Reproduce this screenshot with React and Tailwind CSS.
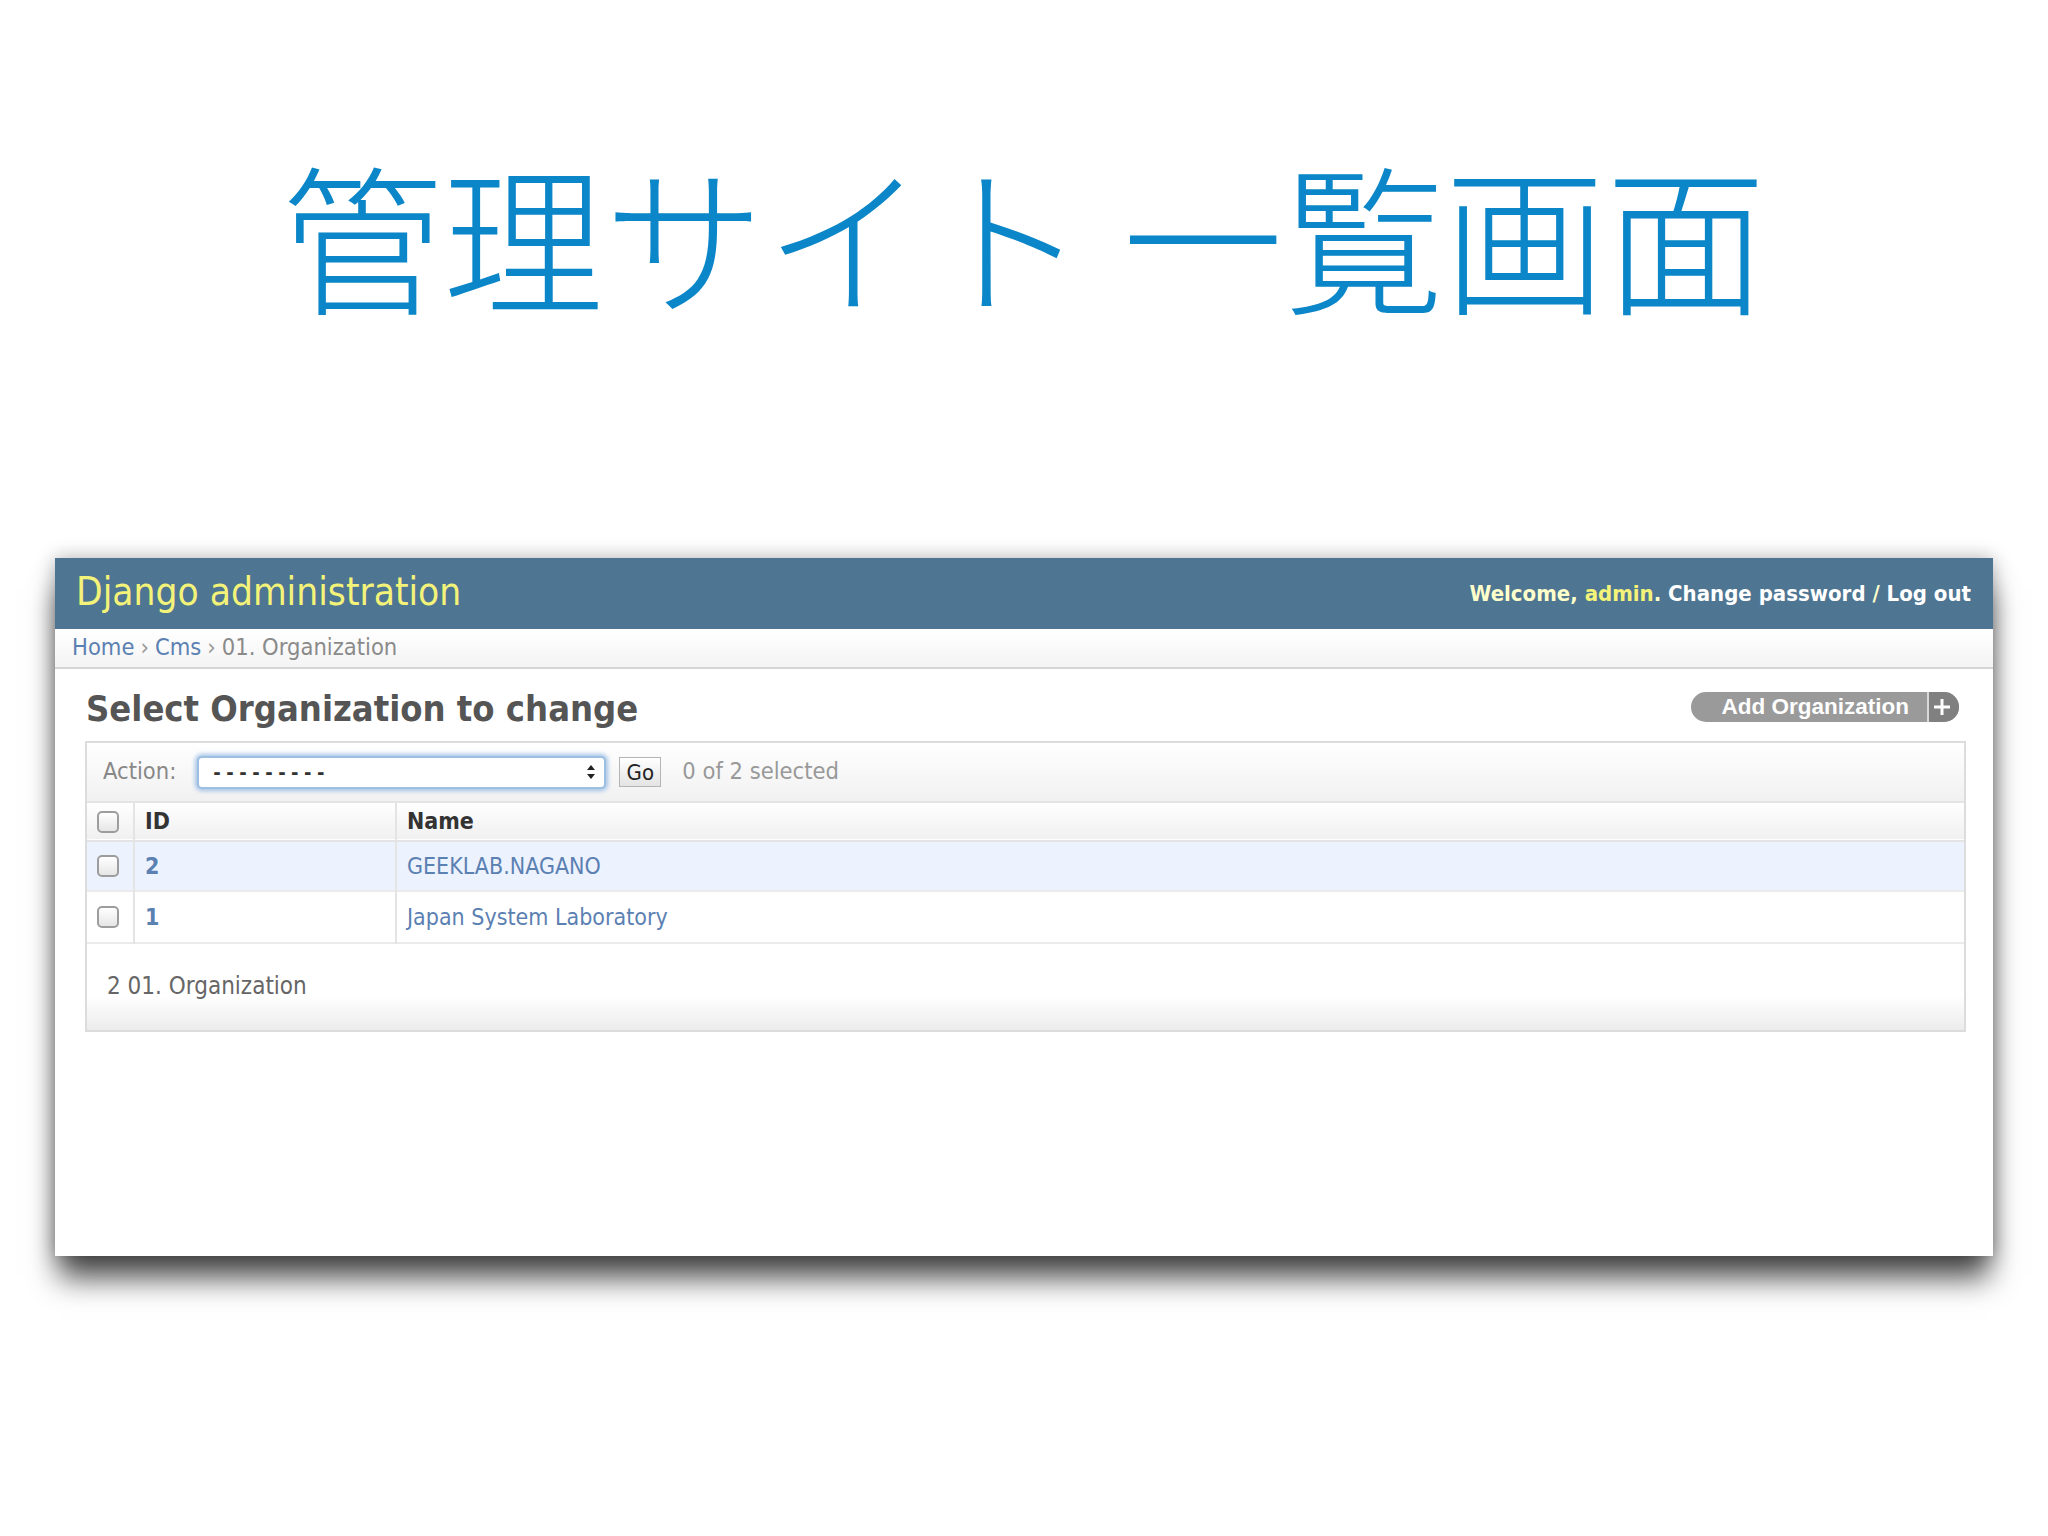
import React from 'react';

const ui = { fontFamily: '"DejaVu Sans Condensed", "DejaVu Sans", "Noto Sans", sans-serif', fontStretch: 'condensed' };

function Check() {
  return (
    <span className="inline-block w-[22px] h-[22px] rounded-[5px] border-2 border-[#9d9d9d] bg-gradient-to-b from-white to-[#e6e6e6]" />
  );
}

export default function App() {
  const rows = [
    { id: 2, name: 'GEEKLAB.NAGANO' },
    { id: 1, name: 'Japan System Laboratory' },
  ];

  return (
    <div className="w-[2048px] h-[1536px] bg-white overflow-hidden">
      <h1
        className="pt-[152px] text-center text-[#0b86c8] text-[161px] leading-none font-light"
        style={{ fontFamily: '"Noto Sans CJK JP", "Noto Sans CJK SC", sans-serif' }}
      >
        管理サイト 一覧画面
      </h1>

      <div className="mt-[245px] ml-[55px] w-[1938px] h-[698px] bg-white shadow-[0_26px_28px_-4px_rgba(0,0,0,0.7),0_0_18px_rgba(0,0,0,0.3)]" style={ui}>
        {/* header */}
        <div className="h-[71px] bg-[#4e7591] flex items-center justify-between pl-[21px] pr-[22px]">
          <div className="text-[38.5px] text-[#f4f379] leading-none pb-[2px]">Django administration</div>
          <div className="text-[22px] font-bold text-[#ffffcc] leading-none">
            Welcome, <span className="text-[#f4f379]">admin</span>. <span className="text-white">Change password</span> / <span className="text-white">Log out</span>
          </div>
        </div>

        {/* breadcrumbs */}
        <div className="h-[40px] flex items-center px-[17px] text-[23.5px] text-[#999] border-b-2 border-[#d6d6d6] bg-gradient-to-b from-white to-[#f4f4f4]">
          <span className="text-[#5b80b2]">Home</span>
          <span className="mx-[6px]">›</span>
          <span className="text-[#5b80b2]">Cms</span>
          <span className="mx-[6px]">›</span>
          <span className="text-[#8a8a8a]">01. Organization</span>
        </div>

        <div className="pl-[30px] pr-[27px]">
          <div className="flex items-center justify-between h-[72px] pt-[8px]">
            <div className="text-[36px] font-bold text-[#555] leading-none pl-[1px]">Select Organization to change</div>
            <div
              className="flex items-stretch h-[30px] rounded-full overflow-hidden bg-[#9a9a9a] text-white text-[22.5px] font-bold mr-[7px] -mt-[4px]"
              style={{ fontFamily: '"Liberation Sans", Arial, sans-serif' }}
            >
              <span className="flex items-center pl-[31px] pr-[18px]">Add Organization</span>
              <span className="w-[2px] bg-[#d8d8d8]" />
              <span className="flex items-center justify-center w-[30px] pr-[4px] bg-[#808080]">
                <svg width="18" height="18" viewBox="0 0 18 18">
                  <path d="M9 1 V17 M1 9 H17" stroke="#fff" strokeWidth="3" />
                </svg>
              </span>
            </div>
          </div>

          {/* changelist */}
          <div className="border-2 border-[#dcdcdc]">
            <div className="h-[60px] flex items-center pl-[16px] bg-gradient-to-b from-white to-[#f1f1f1] border-b-2 border-[#e4e4e4] text-[23.5px]">
              <span className="text-[#888]">Action:</span>
              <div className="ml-[21px] w-[409px] h-[33px] rounded-[5px] border-2 border-[#9dbfe2] shadow-[0_0_4px_2px_rgba(110,160,220,0.6)] bg-white flex items-center justify-between pl-[14px] pr-[8px]">
                <span className="text-[#333] text-[20px] font-bold tracking-[5.5px]">---------</span>
                <svg width="10" height="18" viewBox="0 0 10 18">
                  <path d="M5 2 L9 7 H1 Z" fill="#222" />
                  <path d="M5 16 L9 11 H1 Z" fill="#222" />
                </svg>
              </div>
              <div className="ml-[13px] w-[42px] h-[30px] border border-[#b5b5b5] bg-gradient-to-b from-white to-[#e4e4e4] flex items-center justify-center text-[22px] text-[#222]">Go</div>
              <span className="ml-[21px] text-[#999]">0 of 2 selected</span>
            </div>

            <table className="w-full border-collapse text-[23px]">
              <thead>
                <tr className="h-[38px] bg-gradient-to-b from-white to-[#f0f0f0] border-b-2 border-[#e4e4e4]">
                  <th className="w-[47px] border-r-2 border-[#e4e4e4] pl-[10px] text-left align-middle"><div className="flex"><Check /></div></th>
                  <th className="w-[262px] border-r-2 border-[#e4e4e4] pl-[10px] text-left font-bold text-[#333]">ID</th>
                  <th className="pl-[10px] text-left font-bold text-[#333]">Name</th>
                </tr>
              </thead>
              <tbody>
                {rows.map((r, i) => (
                  <tr key={r.id} className={(i === 0 ? 'h-[50px] bg-[#edf3fe]' : 'h-[52px] bg-white') + ' border-b-2 border-[#ebebeb]'}>
                    <td className="border-r-2 border-[#e4e4e4] pl-[10px] align-middle"><div className="flex"><Check /></div></td>
                    <td className="border-r-2 border-[#e4e4e4] pl-[10px] font-bold text-[#5b80b2]">{r.id}</td>
                    <td className="pl-[10px] text-[#5b80b2]">{r.name}</td>
                  </tr>
                ))}
              </tbody>
            </table>

            <div className="h-[86px] flex items-center pl-[20px] pb-[2px] text-[24px] text-[#666] bg-gradient-to-b from-white from-60% to-[#ececec]">
              2 01. Organization
            </div>
          </div>
        </div>
      </div>
    </div>
  );
}
